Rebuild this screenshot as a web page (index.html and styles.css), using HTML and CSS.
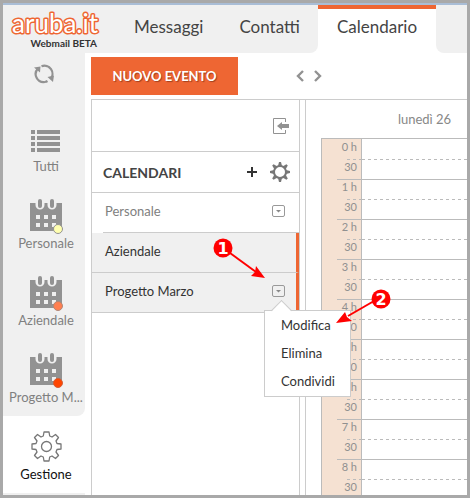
FILE: index.html
```html
<!DOCTYPE html>
<html lang="it">
<head>
  <meta charset="UTF-8">
  <meta name="viewport" content="width=device-width,initial-scale=1.0">
  <title>Webmail - Calendario</title>
  <link rel="stylesheet" href="styles.css">
</head>
<body>
<svg class="defs" width="0" height="0">
  <symbol id="calendar" viewBox="0 0 33 33">
    <path fill="#929292" fill-rule="evenodd" d="M0 4h5.500v2a4.500 4.500 0 0 0 9 0v-2h3v2a4.500 4.500 0 0 0 9 0v-2H32v28H0zM6 16v4h4v-4zM14 16v4h4v-4zM22 16v4h4v-4zM6 24v4h4v-4zM14 24v4h4v-4zM22 24v4h4v-4z"/>
    <rect x="8" y="0" width="4" height="9" rx="2" fill="#929292"/>
    <rect x="20" y="0" width="4" height="9" rx="2" fill="#929292"/>
  </symbol>
  <symbol id="drop" viewBox="0 0 13 12">
    <rect x="0.500" y="0.500" width="12" height="11" rx="1.500" fill="none" stroke="#999"/>
    <path d="M4 5h5L6.500 7.500z" fill="#888"/>
  </symbol>
</svg>
<div class="app">
  <header class="top">
    <div class="top-left">
      <a class="logo" href="#">
        <svg width="96" height="30" viewBox="0 0 96 30">
          <text x="3" y="26">aruba.it</text>
        </svg>
        <span>Webmail BETA</span>
      </a>
      <nav>
        <a href="#">Messaggi</a>
        <a href="#">Contatti</a>
      </nav>
    </div>
    <a class="tab" href="#">Calendario</a>
    <div class="top-right"></div>
  </header>

  <div class="body">
    <aside class="side">
      <div class="side-list">
        <button class="refresh" type="button" aria-label="Aggiorna">
          <svg width="20" height="20" viewBox="0 0 20 20">
            <g fill="none" stroke="#929292" stroke-width="2.200">
              <path d="M11 18A8 8 0 0 1 4 4.500"/>
              <path d="M7.500 2.300A8 8 0 0 1 16.500 15"/>
              <path d="M11 18A8 8 0 0 0 13.500 17"/>
            </g>
            <path fill="#929292" d="M0 3.500L6.500 2.500 6 8.500zM20 11.500L19 18 13.500 13z"/>
          </svg>
        </button>
        <a class="side-item" href="#">
          <svg width="33" height="35" viewBox="0 0 33 35">
            <path fill="#929292" d="M1 8h4v4H1zM7 8h23v4H7zM1 14h4v4H1zM7 14h23v4H7zM1 20h4v4H1zM7 20h23v4H7zM1 26h4v4H1zM7 26h23v4H7z"/>
          </svg>
          <span>Tutti</span>
        </a>
        <a class="side-item" href="#">
          <svg width="33" height="35" viewBox="0 0 33 35">
            <use href="#calendar" width="33" height="33"/>
            <circle cx="28" cy="30" r="4.500" fill="#ffffb0" stroke="#929292"/>
          </svg>
          <span>Personale</span>
        </a>
        <a class="side-item" href="#">
          <svg width="33" height="35" viewBox="0 0 33 35">
            <use href="#calendar" width="33" height="33"/>
            <circle cx="28" cy="30" r="4.500" fill="#ff7f50" stroke="#b08878"/>
          </svg>
          <span>Aziendale</span>
        </a>
        <a class="side-item" href="#">
          <svg width="33" height="35" viewBox="0 0 33 35">
            <use href="#calendar" width="33" height="33"/>
            <circle cx="28" cy="30" r="4.500" fill="#ff4500" stroke="#d0603a"/>
          </svg>
          <span>Progetto M...</span>
        </a>
      </div>
      <a class="side-item active" href="#">
        <svg width="31" height="35" viewBox="0 0 31 35">
          <g fill="none" stroke="#777" stroke-width="1.300" stroke-linejoin="round" transform="translate(15.500 16.500)">
            <circle r="5"/>
            <path d="M-2.500 -14.500H2.500L3.200 -10.500L5.500 -9.500L9 -12L12 -9L9.500 -5.500L10.500 -3L14.500 -2.500V2.500L10.500 3L9.500 5.500L12 9L9 12L5.500 9.500L3.200 10.500L2.500 14.500H-2.500L-3.200 10.500L-5.500 9.500L-9 12L-12 9L-9.500 5.500L-10.500 3L-14.500 2.500V-2.500L-10.500 -3L-9.500 -5.500L-12 -9L-9 -12L-5.500 -9.500L-3.200 -10.500Z"/>
          </g>
        </svg>
        <span>Gestione</span>
      </a>
      <div class="side-end"></div>
    </aside>

    <main>
      <div class="toolbar">
        <button class="new-event" type="button">NUOVO EVENTO</button>
        <div class="pager">
          <button type="button" aria-label="Precedente">
            <svg width="8" height="12" viewBox="0 0 8 12"><path d="M7 1L2 6l5 5" fill="none" stroke="#929292" stroke-width="2.400"/></svg>
          </button>
          <button type="button" aria-label="Successivo">
            <svg width="8" height="12" viewBox="0 0 8 12"><path d="M1 1l5 5-5 5" fill="none" stroke="#929292" stroke-width="2.400"/></svg>
          </button>
        </div>
      </div>

      <div class="content">
        <section class="panel">
          <div class="panel-tools">
            <button type="button" aria-label="Chiudi pannello">
              <svg width="16" height="16" viewBox="0 0 16 16">
                <path d="M12.500 4V0.500H0.500v15h12V12" fill="none" stroke="#929292"/>
                <path d="M4 8l5-4v2h7v4H9v2z" fill="#929292"/>
              </svg>
            </button>
          </div>
          <div class="panel-head">
            <h2>CALENDARI</h2>
            <button type="button" aria-label="Aggiungi">
              <svg width="10" height="10" viewBox="0 0 10 10"><path d="M4 0h2v4h4v2H6v4H4V6H0V4h4z" fill="#333"/></svg>
            </button>
            <button type="button" aria-label="Impostazioni">
              <svg width="20" height="20" viewBox="0 0 20 20">
                <circle cx="10" cy="10" r="6" fill="none" stroke="#777" stroke-width="2"/>
                <path fill="#777" d="M8 4l1-4h2l1 4zM8 16l1 4h2l1-4zM4 8L0 9v2l4 1zM16 8l4 1v2l-4 1zM4.500 7.500L2.200 3.600 3.600 2.200 7.500 4.500zM15.500 7.500l2.300-3.900-1.400-1.400-3.900 2.300zM4.500 12.500l-2.300 3.900 1.400 1.400 3.900-2.300zM15.500 12.500l2.300 3.900-1.400 1.400-3.900-2.300z"/>
              </svg>
            </button>
          </div>
          <ul class="calendars">
            <li>
              <span>Personale</span>
              <button type="button" aria-label="Opzioni Personale"><svg width="13" height="12"><use href="#drop"/></svg></button>
            </li>
            <li class="selected"><span>Aziendale</span></li>
            <li class="selected">
              <span>Progetto Marzo</span>
              <button type="button" aria-label="Opzioni Progetto Marzo"><svg width="13" height="12"><use href="#drop"/></svg></button>
              <div class="menu">
                <a href="#">Modifica</a>
                <a href="#">Elimina</a>
                <a href="#">Condividi</a>
              </div>
              <svg class="steps" width="184" height="94" viewBox="0 0 184 94">
                <g stroke="#f00" stroke-width="2">
                  <path d="M18 18L44 37"/>
                  <path d="M162 66L136 81"/>
                </g>
                <path fill="#f00" d="M53 43l-14-2 4-4 1-6zM124 88l9-11 2 5 5 4z"/>
                <circle cx="11" cy="13" r="9.500" fill="#f00"/>
                <circle cx="169" cy="64" r="9.500" fill="#f00"/>
                <text x="11" y="19">1</text>
                <text x="169" y="70">2</text>
              </svg>
            </li>
          </ul>
        </section>

        <section class="agenda">
          <table>
            <thead>
              <tr><td></td><th scope="col">lunedì 26</th></tr>
            </thead>
            <tbody>
              <tr><th scope="row"><span>0 h</span></th><td></td></tr>
              <tr class="full"><th scope="row"><span>30</span></th><td></td></tr>
              <tr><th scope="row"><span>1 h</span></th><td></td></tr>
              <tr class="full"><th scope="row"><span>30</span></th><td></td></tr>
              <tr><th scope="row"><span>2 h</span></th><td></td></tr>
              <tr class="full"><th scope="row"><span>30</span></th><td></td></tr>
              <tr><th scope="row"><span>3 h</span></th><td></td></tr>
              <tr class="full"><th scope="row"><span>30</span></th><td></td></tr>
              <tr><th scope="row"><span>4 h</span></th><td></td></tr>
              <tr class="full"><th scope="row"><span>30</span></th><td></td></tr>
              <tr><th scope="row"><span>5 h</span></th><td></td></tr>
              <tr class="full"><th scope="row"><span>30</span></th><td></td></tr>
              <tr><th scope="row"><span>6 h</span></th><td></td></tr>
              <tr class="full"><th scope="row"><span>30</span></th><td></td></tr>
              <tr><th scope="row"><span>7 h</span></th><td></td></tr>
              <tr class="full"><th scope="row"><span>30</span></th><td></td></tr>
              <tr><th scope="row"><span>8 h</span></th><td></td></tr>
              <tr class="full"><th scope="row"><span>30</span></th><td></td></tr>
            </tbody>
          </table>
        </section>
      </div>
    </main>
  </div>
</div>
</body>
</html>
```
FILE: styles.css
```css
*{
  box-sizing: border-box;
}
body{
  margin: 0;
  font-family: Lato, "Liberation Sans", sans-serif;
  font-size: 13px;
  color: #444;
}
a{
  color: inherit;
  text-decoration: none;
}
button{
  display: flex;
  padding: 0;
  border: 0;
  background: none;
  font-family: inherit;
  cursor: pointer;
}
.defs{
  position: absolute;
}
.app{
  display: flex;
  flex-direction: column;
  height: 100vh;
  overflow: hidden;
  border: 3px solid #a9a9a9;
  background: #fff;
}

/* header */
.top{
  display: flex;
  flex: none;
  height: 50px;
  padding-top: 1px;
  box-shadow: inset 0 2px #a9bdd6, inset 0 1px #dde;
}
.top-left{
  display: flex;
  width: 315px;
  margin-top: 1px;
  background: #f0f0f0;
  border-bottom-right-radius: 8px;
}
.logo{
  display: flex;
  flex-direction: column;
  width: 131px;
  padding: 2px 0 0 6px;
}
.logo svg text{
  font-size: 26px;
  fill: #fff;
  stroke: #ee6633;
  stroke-width: 3px;
  stroke-linejoin: round;
  paint-order: stroke;
}
.logo span{
  width: 88px;
  font-size: 10px;
  line-height: 12px;
  font-weight: 700;
  text-align: right;
  color: #333;
}
nav{
  display: flex;
  gap: 36px;
}
nav a, .tab{
  font-size: 17px;
  line-height: 43px;
}
.tab{
  width: 118px;
  margin-top: 1px;
  border-top: 4px solid #ee6633;
  background: #fff;
  text-align: center;
  line-height: 35px;
}
.top-right{
  flex: 1;
  margin-top: 1px;
  background: #f0f0f0;
  border-bottom-left-radius: 8px;
}

.body{
  display: flex;
  flex: 1;
  min-height: 0;
}

/* left bar */
.side{
  display: flex;
  flex-direction: column;
  flex: none;
  width: 82px;
  color: #808080;
}
.side-list{
  background: #f0f0f0;
  border-bottom-right-radius: 8px;
}
.refresh{
  justify-content: center;
  width: 100%;
  height: 55px;
  padding-top: 11px;
}
.side-item{
  display: flex;
  flex-direction: column;
  align-items: center;
  height: 77px;
  padding: 14px 0 0 4px;
}
.side-item svg{
  flex: none;
}
.side-item span{
  font-size: 13px;
  line-height: 18px;
  white-space: nowrap;
}
.side-item.active{
  color: #111;
}
.side-end{
  flex: 1;
  background: #f0f0f0;
}

main{
  display: flex;
  flex-direction: column;
  flex: 1;
  min-width: 0;
  padding-left: 6px;
}
.toolbar{
  display: flex;
  align-items: center;
  flex: none;
  height: 47px;
  border-bottom: 1px solid #ccc;
}
.new-event{
  align-items: center;
  justify-content: center;
  width: 147px;
  height: 38px;
  background: #ee6633;
  color: #fff;
  font-size: 13px;
  font-weight: 700;
  text-shadow: 1px 1px 1px #a04020;
}
.pager{
  display: flex;
  gap: 10px;
  margin-left: 58px;
}
.content{
  display: flex;
  flex: 1;
  min-height: 0;
}

/* calendar list */
.panel{
  flex: none;
  width: 209px;
  border: 1px solid #ccc;
  border-width: 0 1px;
}
.panel-tools{
  display: flex;
  align-items: center;
  justify-content: flex-end;
  height: 52px;
  padding-right: 10px;
  border-bottom: 1px solid #ccc;
}
.panel-head{
  display: flex;
  align-items: center;
  gap: 13px;
  height: 41px;
  padding: 0 9px 0 11px;
  border-bottom: 1px solid #ccc;
}
h2{
  flex: 1;
  margin: 0;
  font-size: 14px;
  font-weight: 700;
}
.calendars{
  margin: 0;
  padding: 0;
  list-style: none;
}
.calendars li{
  position: relative;
  display: flex;
  align-items: center;
  justify-content: space-between;
  height: 40px;
  margin-left: 11px;
  padding: 0 14px 4px 2px;
  border-bottom: 1px solid #ccc;
  color: #808080;
}
.calendars li.selected{
  margin-left: 0;
  padding: 0 11px 4px 13px;
  border-right: 3px solid #ee6633;
  background: #f0f0f0;
  color: #333;
}
.menu{
  position: absolute;
  top: 37px;
  left: 172px;
  z-index: 1;
  width: 87px;
  padding-bottom: 1px;
  border: 1px solid #ccc;
  background: #fff;
}
.menu::before{
  content: "";
  position: absolute;
  top: -8px;
  left: 9px;
  width: 14px;
  height: 14px;
  border: 1px solid #ccc;
  border-width: 1px 0 0 1px;
  background: linear-gradient(135deg, #fff 50%, transparent 50%);
  transform: rotate(45deg);
}
.menu a{
  display: block;
  padding-left: 16px;
  line-height: 28px;
}
.steps{
  position: absolute;
  top: -38px;
  left: 120px;
  z-index: 2;
  pointer-events: none;
}
.steps text{
  fill: #fff;
  font-family: "DejaVu Sans", sans-serif;
  font-size: 16px;
  font-weight: 700;
  text-anchor: middle;
}

/* day grid */
.agenda{
  flex: 1;
  min-width: 0;
  margin-left: 5px;
  padding-left: 15px;
  border-left: 1px solid #ccc;
  overflow: hidden;
}
.agenda table{
  width: 100%;
  min-width: 166px;
  border-collapse: separate;
  border-spacing: 0;
  table-layout: fixed;
}
.agenda th, .agenda td{
  padding: 0;
}
.agenda thead td{
  width: 41px;
}
.agenda thead th{
  height: 38px;
  font-weight: 400;
  color: #888;
}
.agenda tbody th{
  border: 1px solid #bbb;
  border-width: 0 1px;
  background: #f5e1d2;
  font-size: 11px;
  font-weight: 400;
  text-align: right;
  white-space: nowrap;
  color: #909090;
}
.agenda tbody tr:first-child > *{
  padding-top: 1px;
  border-top: 1px solid #bbb;
}
.agenda tbody span{
  display: block;
  height: 20px;
  margin-left: 15px;
  padding-right: 4px;
  line-height: 14px;
}
.agenda tbody td{
  background: repeating-linear-gradient(90deg, #bbb 0 3px, transparent 3px 6px) left bottom / 100% 1px no-repeat;
}
.agenda tbody span{
  background: repeating-linear-gradient(90deg, #bbb 0 3px, transparent 3px 6px) right bottom / 14px 1px no-repeat;
}
.agenda .full span, .agenda .full td{
  background: none;
  border-bottom: 1px solid #bbb;
}
```
